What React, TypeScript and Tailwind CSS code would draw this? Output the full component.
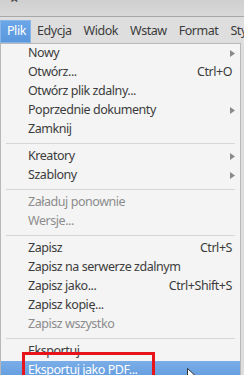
import React from 'react';

type Item =
    | { sep: true }
    | { label: string; shortcut?: string; sub?: boolean; disabled?: boolean; active?: boolean };

const items: Item[] = [
    { label: 'Nowy', sub: true },
    { label: 'Otwórz...', shortcut: 'Ctrl+O' },
    { label: 'Otwórz plik zdalny...' },
    { label: 'Poprzednie dokumenty', sub: true },
    { label: 'Zamknij' },
    { sep: true },
    { label: 'Kreatory', sub: true },
    { label: 'Szablony', sub: true },
    { sep: true },
    { label: 'Załaduj ponownie', disabled: true },
    { label: 'Wersje...', disabled: true },
    { sep: true },
    { label: 'Zapisz', shortcut: 'Ctrl+S' },
    { label: 'Zapisz na serwerze zdalnym' },
    { label: 'Zapisz jako...', shortcut: 'Ctrl+Shift+S' },
    { label: 'Zapisz kopię...' },
    { label: 'Zapisz wszystko', disabled: true },
    { sep: true },
    { label: 'Eksportuj' },
    { label: 'Eksportuj jako PDF...', active: true },
];

const menus = ['Edycja', 'Widok', 'Wstaw', 'Format', 'Styl'];

export default function App() {
    return (
        <div
            className="w-[244px] h-[375px] overflow-hidden bg-[#dedede] text-[12.5px] tracking-[-0.45px] text-[#3c3c3c] relative"
            style={{ fontFamily: '"Noto Sans", "Open Sans", sans-serif' }}
        >
            {/* title bar */}
            <div className="h-[17px] bg-gradient-to-b from-[#cfcfcf] to-[#d9d9d9] border-b border-[#a8a8a8] pl-[10px] overflow-hidden">
                <div className="text-[15px] leading-[15px] -mt-[9px] text-[#4a4a4a] font-bold">×</div>
            </div>

            {/* menu bar */}
            <div className="h-[26px] flex items-end whitespace-nowrap">
                <div className="h-[23px] w-[31px] shrink-0 bg-gradient-to-b from-[#6aa6e8] to-[#5a97dc] border border-[#86b5ea] text-white flex items-center pl-[6px]">
                    Plik
                </div>
                {menus.map((m) => (
                    <div key={m} className="h-[23px] flex items-center px-[6px]">
                        {m}
                    </div>
                ))}
            </div>

            {/* dropdown */}
            <div className="w-[241px] bg-[#f4f4f4] border-l border-r border-t border-[#b8b8b8]">
                {items.map((it, i) =>
                    'sep' in it ? (
                        <div key={i} className="h-[8px] flex items-center px-[5px]">
                            <div className="h-px w-full bg-[#d6d6d6]" />
                        </div>
                    ) : (
                        <div
                            key={i}
                            className={`h-[19px] flex items-center pl-[27px] pr-[8px] ${
                                it.active ? 'bg-gradient-to-b from-[#7aaee8] to-[#6099dc] text-white' : ''
                            } ${it.disabled ? 'text-[#8c8c8c]' : ''}`}
                        >
                            <span className="flex-1 whitespace-nowrap">{it.label}</span>
                            {it.shortcut && <span className="whitespace-nowrap">{it.shortcut}</span>}
                            {it.sub && (
                                <svg width="5" height="7" viewBox="0 0 5 7" className="mr-[-3px]">
                                    <path d="M0 0 L5 3.5 L0 7 Z" fill="#8a8a8a" />
                                </svg>
                            )}
                        </div>
                    )
                )}
            </div>

            {/* red highlight box */}
            <div className="absolute left-[22px] top-[352px] w-[133px] h-[40px] border-[3px] border-[#e8141b]" />

            {/* mouse cursor */}
            <svg className="absolute left-[187px] top-[368px]" width="9" height="12" viewBox="0 0 9 12">
                <path d="M0.5 0.5 L0.5 10 L3 8 L5 11.5 L6.5 10.8 L4.6 7.4 L8 7.4 Z" fill="#fff" stroke="#333" strokeWidth="1" />
            </svg>
        </div>
    );
}
